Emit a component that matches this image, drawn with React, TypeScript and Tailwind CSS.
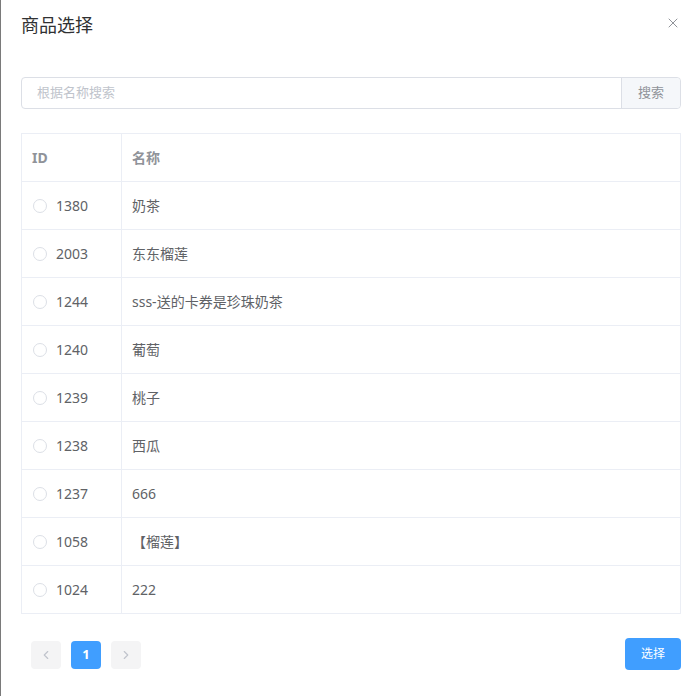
import { X, ChevronLeft, ChevronRight } from "lucide-react";

const rows = [
  { id: 1380, name: "奶茶" },
  { id: 2003, name: "东东榴莲" },
  { id: 1244, name: "sss-送的卡券是珍珠奶茶" },
  { id: 1240, name: "葡萄" },
  { id: 1239, name: "桃子" },
  { id: 1238, name: "西瓜" },
  { id: 1237, name: "666" },
  { id: 1058, name: "【榴莲】" },
  { id: 1024, name: "222" },
];

const App = () => {
  return (
    <div
      className="flex w-[696px] h-[696px] bg-white overflow-hidden"
      style={{ fontFamily: '"Noto Sans", "Noto Sans CJK SC", sans-serif' }}
    >
      <div className="w-px h-full bg-[#7a7a7a]" />
      <div className="flex-1 flex flex-col pl-[20px] pr-[15px]">
        {/* header */}
        <div className="flex items-start justify-between pt-[13px] h-[77px]">
          <h2 className="text-[18px] leading-6 text-[#303133]">商品选择</h2>
          <button className="mt-[2px] text-[#909399]">
            <X className="w-4 h-4" strokeWidth={1.5} />
          </button>
        </div>

        {/* search */}
        <div className="flex h-[32px] w-[660px] border border-[#dcdfe6] rounded">
          <input
            className="flex-1 px-[15px] text-[13px] outline-none placeholder:text-[#c0c4cc] rounded-l"
            placeholder="根据名称搜索"
          />
          <button className="w-[59px] bg-[#f5f7fa] border-l border-[#dcdfe6] text-[13px] text-[#909399] rounded-r">
            搜索
          </button>
        </div>

        {/* table */}
        <div className="mt-[24px] w-[660px] border border-[#ebeef5] text-[14px]">
          <div className="flex h-[48px] border-b border-[#ebeef5] font-bold text-[#909399]">
            <div className="w-[100px] border-r border-[#ebeef5] flex items-center pl-[10px]">ID</div>
            <div className="flex-1 flex items-center pl-[10px]">名称</div>
          </div>
          {rows.map((r, i) => (
            <div
              key={r.id}
              className={`flex text-[#606266] ${i < rows.length - 1 ? "h-[48px] border-b border-[#ebeef5]" : "h-[47px]"}`}
            >
              <div className="w-[100px] border-r border-[#ebeef5] flex items-center pl-[11px] gap-[9px]">
                <span className="w-[14px] h-[14px] rounded-full border border-[#dcdfe6] bg-white" />
                <span>{r.id}</span>
              </div>
              <div className="flex-1 flex items-center pl-[10px]">{r.name}</div>
            </div>
          ))}
        </div>

        {/* footer */}
        <div className="mt-[24px] w-[660px] flex items-center justify-between">
          <div className="flex items-center gap-[10px] pl-[10px] mt-[2px]">
            <button className="w-[30px] h-[28px] bg-[#f4f4f5] rounded-sm flex items-center justify-center text-[#c0c4cc]">
              <ChevronLeft className="w-[14px] h-[14px]" />
            </button>
            <button className="w-[30px] h-[28px] bg-[#409eff] rounded-sm text-white text-[13px] font-bold">
              1
            </button>
            <button className="w-[30px] h-[28px] bg-[#f4f4f5] rounded-sm flex items-center justify-center text-[#c0c4cc]">
              <ChevronRight className="w-[14px] h-[14px]" />
            </button>
          </div>
          <button className="w-[56px] h-[32px] bg-[#409eff] rounded text-white text-[12px]">选择</button>
        </div>
      </div>
    </div>
  );
};

export default App;
